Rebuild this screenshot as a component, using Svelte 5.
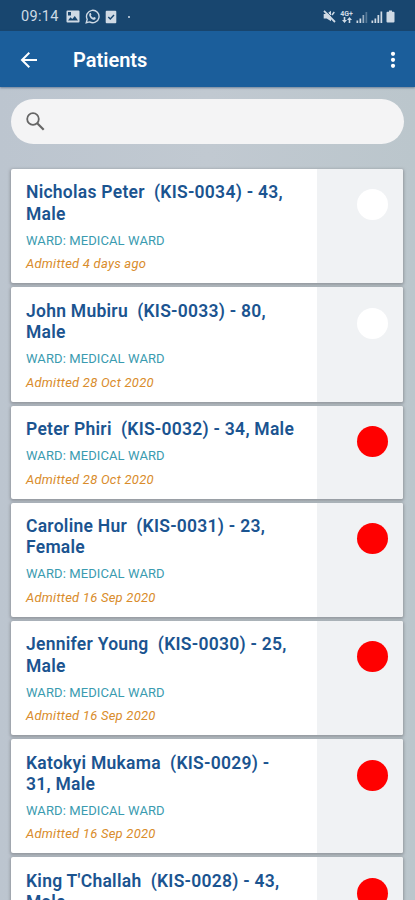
<script>
	let search = $state('');

	const patients = [
		{ name: 'Nicholas Peter', id: 'KIS-0034', age: 43, sex: 'Male', ward: 'MEDICAL WARD', admitted: '4 days ago', alert: false },
		{ name: 'John Mubiru', id: 'KIS-0033', age: 80, sex: 'Male', ward: 'MEDICAL WARD', admitted: '28 Oct 2020', alert: false },
		{ name: 'Peter Phiri', id: 'KIS-0032', age: 34, sex: 'Male', ward: 'MEDICAL WARD', admitted: '28 Oct 2020', alert: true },
		{ name: 'Caroline Hur', id: 'KIS-0031', age: 23, sex: 'Female', ward: 'MEDICAL WARD', admitted: '16 Sep 2020', alert: true },
		{ name: 'Jennifer Young', id: 'KIS-0030', age: 25, sex: 'Male', ward: 'MEDICAL WARD', admitted: '16 Sep 2020', alert: true },
		{ name: 'Katokyi Mukama', id: 'KIS-0029', age: 31, sex: 'Male', ward: 'MEDICAL WARD', admitted: '16 Sep 2020', alert: true },
		{ name: "King T'Challah", id: 'KIS-0028', age: 43, sex: 'Male', ward: 'MEDICAL WARD', admitted: '16 Sep 2020', alert: true }
	];

	let visible = $derived(
		patients.filter((p) => (p.name + ' ' + p.id).toLowerCase().includes(search.toLowerCase()))
	);
</script>

<div class="screen">
	<div class="status">
		<span class="time">09:14</span>
		<svg class="picture" width="14" height="13" viewBox="0 0 14 13">
			<path fill="currentColor" fill-rule="evenodd" d="M1.5 .5h11a1 1 0 0 1 1 1v10a1 1 0 0 1-1 1h-11a1 1 0 0 1-1-1v-10a1 1 0 0 1 1-1zM2 10.5h10L8.8 6 6.3 9 4.5 7.300zM2 2v3.500h3V2z" />
		</svg>
		<svg class="whatsapp" width="15" height="15" viewBox="0 0 24 24">
			<path fill="none" stroke="currentColor" stroke-width="2.200" d="M2 22l1.500-5.500A10 10 0 1 1 7.300 20.600z" />
			<path fill="currentColor" d="M8 6.500c.5-.4 1.200-.3 1.400.3l.8 1.900c.1.400-.8 1.300-.8 1.600.8 1.700 2 2.900 3.900 3.700.4 0 1.100-1.200 1.500-1.100l2.200 1.100c.7.400-.2 2.300-1.300 2.900-2 .9-4.800-.6-6.500-2.300C7.300 12.700 5.500 9 8 6.500z" />
		</svg>
		<svg class="task" width="12" height="14" viewBox="0 0 12 14">
			<path fill="currentColor" d="M1.700 .8h8.600a1 1 0 0 1 1 1v10.400a1 1 0 0 1-1 1H1.700a1 1 0 0 1-1-1V1.800a1 1 0 0 1 1-1z" />
			<path fill="none" stroke="#18466f" stroke-width="1.400" d="M3.300 7l2 2 3.700-4" />
		</svg>
		<span class="dot"></span>

		<svg class="mute" width="13" height="13" viewBox="0 0 13 13">
			<path fill="currentColor" d="M.7 4h3l4.300-3.300v10.600L3.700 8.500h-3z" />
			<path stroke="#18466f" stroke-width="1" d="M2.500.5l10 10.300" />
			<path stroke="currentColor" stroke-width="1.800" d="M1 .8l11 11.200" />
			<path fill="none" stroke="currentColor" stroke-width="1.500" d="M9 5l2.300-3" />
		</svg>
		<div class="network">
			<span>4G+</span>
			<svg width="10" height="6" viewBox="0 0 10 6">
				<path fill="currentColor" d="M2.500 6L0 3h1.700V0h1.600v3H5zM7.500 0L10 3H8.300v3H6.700V3H5z" />
			</svg>
		</div>
		<svg class="signal" width="12" height="12" viewBox="0 0 12 12">
			<path fill="currentColor" d="M.5 9.500h1.700V12H.5zM3.500 7.500h1.700V12H3.500z" />
			<path fill="currentColor" opacity=".35" d="M9.500 1h1.700v11H9.500z" />
			<path fill="currentColor" opacity=".7" d="M6.500 4h1.700v8H6.500z" />
		</svg>
		<svg class="signal" width="12" height="12" viewBox="0 0 12 12">
			<path fill="currentColor" d="M.5 9.500h1.700V12H.5zM3.500 7.500h1.700V12H3.500zM6.500 4h1.700v8H6.500zM9.500.5h1.700V12H9.500z" />
		</svg>
		<svg class="battery" width="9" height="13" viewBox="0 0 9 13">
			<path fill="currentColor" d="M3 .5h3v1.300h1.500a1 1 0 0 1 1 1v8.700a1 1 0 0 1-1 1h-6a1 1 0 0 1-1-1V2.800a1 1 0 0 1 1-1H3z" />
		</svg>
	</div>

	<header>
		<button class="back" aria-label="Back">
			<svg width="18" height="18" viewBox="0 0 18 18">
				<path fill="none" stroke="currentColor" stroke-width="2" d="M17 9H2.500M9.300 1.700L2 9l7.300 7.300" />
			</svg>
		</button>
		<h1>Patients</h1>
		<button class="more" aria-label="More options">
			<svg width="6" height="18" viewBox="0 0 6 18">
				<circle cx="3" cy="2.800" r="2.100" fill="currentColor" />
				<circle cx="3" cy="8.800" r="2.100" fill="currentColor" />
				<circle cx="3" cy="14.800" r="2.100" fill="currentColor" />
			</svg>
		</button>
	</header>

	<main>
		<label class="search">
			<svg width="19" height="19" viewBox="0 0 19 19">
				<circle cx="7" cy="7" r="5.800" fill="none" stroke="#666" stroke-width="1.800" />
				<path stroke="#666" stroke-width="2.200" d="M11 11l6.700 6.700" />
			</svg>
			<input bind:value={search} aria-label="Search" />
		</label>

		<div class="list">
			{#each visible as p}
				<article class="card">
					<div class="info">
						<h2>{p.name}&nbsp; ({p.id}) - {p.age}, {p.sex}</h2>
						<p class="ward">WARD: {p.ward}</p>
						<p class="admitted">Admitted {p.admitted}</p>
					</div>
					<div class="side">
						<span class="light" class:alert={p.alert}></span>
					</div>
				</article>
			{/each}
		</div>
	</main>
</div>

<style>
	:global(body) {
		margin: 0;
		overflow: hidden;
	}

	.screen {
		height: 100vh;
		display: flex;
		flex-direction: column;
		overflow: hidden;
		font-family: Roboto, sans-serif;
		background: linear-gradient(90deg, #bcc5cf, #c1c9d1 50%, #bbc6cc);
	}

	.status {
		flex: none;
		height: 31px;
		box-sizing: border-box;
		display: flex;
		align-items: center;
		padding: 2px 20px 0 21px;
		background: #18466f;
		color: #cfdae5;
	}

	.time {
		width: 45px;
		font-size: 14.5px;
		letter-spacing: 0.3px;
	}

	.whatsapp {
		margin-left: 5px;
	}

	.task {
		margin-left: 5px;
	}

	.dot {
		width: 2px;
		height: 2px;
		margin-left: 11px;
		border-radius: 50%;
		background: #cfdae5;
	}

	.mute {
		margin-left: auto;
	}

	.network {
		width: 13px;
		margin: 0 3px 0 4px;
		display: flex;
		flex-direction: column;
		align-items: center;
		font-size: 7px;
		font-weight: bold;
		line-height: 6px;
	}

	.signal {
		margin-right: 3px;
	}

	header {
		flex: none;
		height: 56px;
		display: flex;
		align-items: center;
		padding: 2px 19px 0 20px;
		box-sizing: border-box;
		background: #1b5e9b;
		color: #fff;
		box-shadow: 0 1px 2px rgba(30, 60, 100, 0.5);
	}

	button {
		display: flex;
		padding: 0;
		border: none;
		background: none;
		color: inherit;
	}

	h1 {
		flex: 1;
		margin: 0 0 0 35px;
		font-size: 20px;
		font-weight: 600;
		letter-spacing: 0;
	}

	main {
		padding: 11.5px 11px 0;
	}

	.search {
		height: 45.500px;
		display: flex;
		align-items: center;
		padding: 0 15px;
		box-sizing: border-box;
		border-radius: 23px;
		background: #f4f4f5;
	}

	.search input {
		flex: 1;
		min-width: 0;
		margin-left: 10px;
		border: none;
		outline: none;
		background: none;
		font: inherit;
	}

	.list {
		display: flex;
		flex-direction: column;
		gap: 4px;
		margin: 25.200px 1px 0 0;
	}

	.card {
		display: flex;
		border-radius: 2px;
		overflow: hidden;
		background: #fff;
		box-shadow: 0 1px 3px 1px rgba(130, 132, 138, 0.7);
	}

	.info {
		width: 306px;
		box-sizing: border-box;
		padding: 13.300px 20px 11.200px 15px;
	}

	h2 {
		margin: 0;
		font-size: 17.500px;
		font-weight: 600;
		line-height: 21.300px;
		letter-spacing: 0.260px;
		color: #1b5490;
	}

	p {
		margin: 0;
		font-size: 13px;
	}

	.ward {
		margin-top: 7.700px;
		line-height: 16px;
		letter-spacing: 0.1px;
		color: #3a9bb0;
	}

	.admitted {
		margin-top: 7.500px;
		line-height: 16px;
		letter-spacing: 0.240px;
		font-style: italic;
		color: #d98c2b;
	}

	.side {
		flex: 1;
		display: flex;
		justify-content: flex-end;
		padding: 20.300px 15px 0 0;
		background: #f0f2f4;
	}

	.light {
		width: 31px;
		height: 31px;
		border-radius: 50%;
		background: #fff;
	}

	.light.alert {
		background: #ff0000;
	}
</style>
